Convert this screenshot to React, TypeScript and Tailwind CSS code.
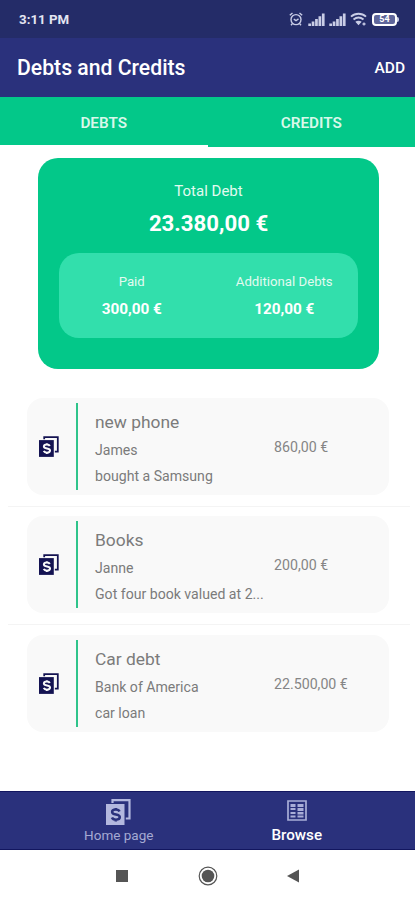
import clsx from 'clsx'

type Deuda = {
  id: number
  title: string
  person: string
  note: string
  amount: string
}

const DEBTS: Deuda[] = [
  { id: 1, title: 'new phone', person: 'James', note: 'bought a Samsung', amount: '860,00 €' },
  { id: 2, title: 'Books', person: 'Janne', note: 'Got four book valued at 2...', amount: '200,00 €' },
  { id: 3, title: 'Car debt', person: 'Bank of America', note: 'car loan', amount: '22.500,00 €' },
]

export default function App() {
  return (
    <div className="flex h-[900px] w-[415px] flex-col overflow-hidden bg-white font-['Roboto',sans-serif]">
      <StatusBar />
      <header className="flex h-[59px] shrink-0 items-center justify-between bg-[#2a317c] pt-px pr-[10px] pl-[17px] text-white">
        <h1 className="text-[21.2px] leading-[26px] font-medium">Debts and Credits</h1>
        <button className="text-[15.5px] leading-[20px] font-medium">ADD</button>
      </header>

      <nav className="grid h-[50px] shrink-0 grid-cols-2 bg-[#03c889]">
        <Tab label="DEBTS" active />
        <Tab label="CREDITS" />
      </nav>

      <Summary />

      <main className="mt-[29px] flex flex-col gap-[9.25px]">
        {DEBTS.map((debt) => (
          <DebtRow key={debt.id} debt={debt} last={debt.id === DEBTS.length} />
        ))}
      </main>

      <BottomNav />
      <SystemNav />
    </div>
  )
}

function StatusBar() {
  return (
    <div className="flex h-[38px] shrink-0 items-center justify-between bg-[#242c68] pr-[16px] pl-[19px]">
      <span className="pt-px text-[13.3px] leading-[16px] font-bold text-[#e3e5f2]">3:11 PM</span>
      <div className="flex items-center text-[#c9cde6]">
        <AlarmIcon />
        <SignalIcon className="ml-[5px]" />
        <SignalIcon className="ml-[4px]" />
        <WifiIcon />
        <div className="ml-[5px] flex items-center">
          <div className="flex h-[13px] w-[25px] items-center justify-center rounded-[4px] border-2 border-current bg-[#5f669b] text-[9px] leading-none font-bold text-white">
            54
          </div>
          <div className="h-[5px] w-[2px] rounded-r-sm bg-current" />
        </div>
      </div>
    </div>
  )
}

function Tab({ label, active = false }: { label: string; active?: boolean }) {
  return (
    <button
      className={clsx(
        'flex items-center justify-center border-b-2 pt-[4px] text-[15.3px] font-semibold text-[#d8f8ea]',
        active ? 'border-white' : 'border-[#03c889]',
      )}
    >
      {label}
    </button>
  )
}

function Summary() {
  return (
    <section className="mt-[11px] ml-[38px] flex h-[211px] w-[341px] shrink-0 flex-col items-center rounded-[20px] bg-[#03c889] pt-[23px]">
      <p className="text-[15px] leading-[20px] text-[#e2faf0]">Total Debt</p>
      <p className="mt-[7px] text-[22.2px] leading-[30px] font-bold text-white">23.380,00 €</p>
      <div className="mt-[15px] grid h-[85px] w-[299px] grid-cols-2 rounded-[20px] bg-[#32dfac] pt-[20px] text-center">
        <div className="pr-[4px]">
          <p className="text-[13.2px] leading-[18px] text-[#e2faf0]">Paid</p>
          <p className="mt-[8px] text-[15.3px] leading-[20px] font-bold text-white">300,00 €</p>
        </div>
        <div className="pl-[2px]">
          <p className="text-[13.2px] leading-[18px] text-[#e2faf0]">Additional Debts</p>
          <p className="mt-[8px] text-[15.3px] leading-[20px] font-bold text-white">120,00 €</p>
        </div>
      </div>
    </section>
  )
}

function DebtRow({ debt, last }: { debt: Deuda; last: boolean }) {
  return (
    <div className={clsx('mr-[5px] ml-[8px] h-[109px] border-b', last ? 'border-transparent' : 'border-[#f4f4f4]')}>
      <div className="ml-[19px] flex h-[97px] w-[362px] rounded-[16px] bg-[#f9f9f9] py-[5px]">
        <div className="flex w-[49px] items-center pl-[12px]">
          <MoneyIcon className="h-[21px] w-[20px] text-[#141352]" />
        </div>
        <div className="w-[2px] bg-[#2fc48b]" />
        <div className="w-[179px] pt-[8px] pl-[17px] whitespace-nowrap text-[#7b7b7b]">
          <h2 className="text-[17.4px] leading-[22px]">{debt.title}</h2>
          <p className="mt-[7px] text-[14.1px] leading-[20px]">{debt.person}</p>
          <p className="mt-[6px] text-[14.1px] leading-[20px]">{debt.note}</p>
        </div>
        <p className="pt-[34px] pl-[17px] text-[14.2px] leading-[20px] text-[#858585]">{debt.amount}</p>
      </div>
    </div>
  )
}

function BottomNav() {
  return (
    <nav className="mt-auto grid h-[59px] shrink-0 grid-cols-2 border-y border-[#12165f] bg-[#2a317c]">
      <div className="flex flex-col items-center pt-[7px] pl-[30px]">
        <MoneyIcon className="h-[26px] w-[25px] text-[#b3b8de]" />
        <span className="mt-px text-[13.5px] leading-[18px] text-[#a5aad3]">Home page</span>
      </div>
      <div className="flex flex-col items-center pt-[8px] pr-[29px]">
        <GridIcon />
        <span className="mt-[4px] text-[15.2px] leading-[20px] font-medium text-white">Browse</span>
      </div>
    </nav>
  )
}

function SystemNav() {
  return (
    <div className="flex h-[50px] shrink-0 items-center bg-white pt-px pl-[116px] text-[#555]">
      <div className="h-[12px] w-[12px] bg-current" />
      <svg viewBox="0 0 20 20" className="ml-[70px] h-[20px] w-[20px]">
        <circle cx="10" cy="10" r="8.8" fill="none" stroke="currentColor" strokeWidth="1.2" />
        <circle cx="10" cy="10" r="6.3" fill="currentColor" />
      </svg>
      <svg viewBox="0 0 12 14" className="ml-[69px] h-[14px] w-[12px]">
        <path d="M12 .5v13L0 7z" fill="currentColor" />
      </svg>
    </div>
  )
}

/* Dos billetes superpuestos con el símbolo de moneda */
function MoneyIcon({ className }: { className?: string }) {
  return (
    <svg viewBox="0 0 25 26" className={className}>
      <path d="M6.5 4V1.2h17v18.3h-3.7" fill="none" stroke="currentColor" strokeWidth="2.2" />
      <path d="M0 5h18.5v21H0z" fill="currentColor" />
      <path
        d="M13.5 12.4c-.6-1.3-1.9-1.9-3.7-1.9-2.2 0-3.7.9-3.7 2.5 0 3.7 7.7 1.5 7.7 5.1 0 1.7-1.6 2.6-3.8 2.6-2 0-3.5-.8-4.1-2.2M9.8 8.9v1.6M9.8 20.7v1.7"
        fill="none"
        className="stroke-[#f9f9f9] [nav_&]:stroke-[#2a317c]"
        strokeWidth="2.5"
      />
    </svg>
  )
}

function GridIcon() {
  return (
    <svg viewBox="0 0 20 21" className="h-[21px] w-[20px] text-[#a9aed8]">
      <path d="M1 1h18v19H1z" fill="none" stroke="currentColor" strokeWidth="1.7" />
      <path
        d="M3.5 4h5v3h-5zM10.5 4h6v3h-6zM3.5 8h5v2h-5zM10.5 8h6v3h-6zM3.5 12h5v2h-5zM10.5 12h6v2.5h-6zM3.5 15.5h5v2h-5zM10.5 15.5h6v2h-6z"
        fill="currentColor"
      />
    </svg>
  )
}

function AlarmIcon() {
  return (
    <svg viewBox="0 0 14 14" className="h-[14px] w-[14px]" fill="none" stroke="currentColor" strokeWidth="1.4">
      <circle cx="7" cy="7.6" r="5" />
      <path d="M.8 3.3 3.5 1M13.2 3.3 10.5 1M4.8 7.2 7 8.7l2.5-1.8M3.3 11.8 2 13.3M10.7 11.8l1.3 1.5" />
    </svg>
  )
}

function SignalIcon({ className }: { className: string }) {
  return (
    <svg viewBox="0 0 17 13" className={clsx('h-[13px] w-[17px]', className)} fill="currentColor">
      <path d="M.3 10.5h2.7V13H.3zM3.7 8.5h2.7V13H3.7zM7.1 6h2.7v7H7.1zM10.5 3.2h2.7V13h-2.7zM13.9.5h2.7V13h-2.7z" />
    </svg>
  )
}

function WifiIcon() {
  return (
    <svg viewBox="0 0 17 14" className="ml-[4px] h-[14px] w-[17px]" fill="none" stroke="currentColor" strokeWidth="1.9">
      <path d="M1 4.6c4.2-3.8 10.8-3.8 15 0M3.5 7.5c3-2.5 7-2.5 10 0" />
      <path d="m5.3 9.8 3.2 3.5 3.2-3.5c-2-1.5-4.4-1.5-6.4 0z" fill="currentColor" stroke="none" />
      <path d="M14 10.5v3M12.5 12h3" strokeWidth="1.3" />
    </svg>
  )
}
